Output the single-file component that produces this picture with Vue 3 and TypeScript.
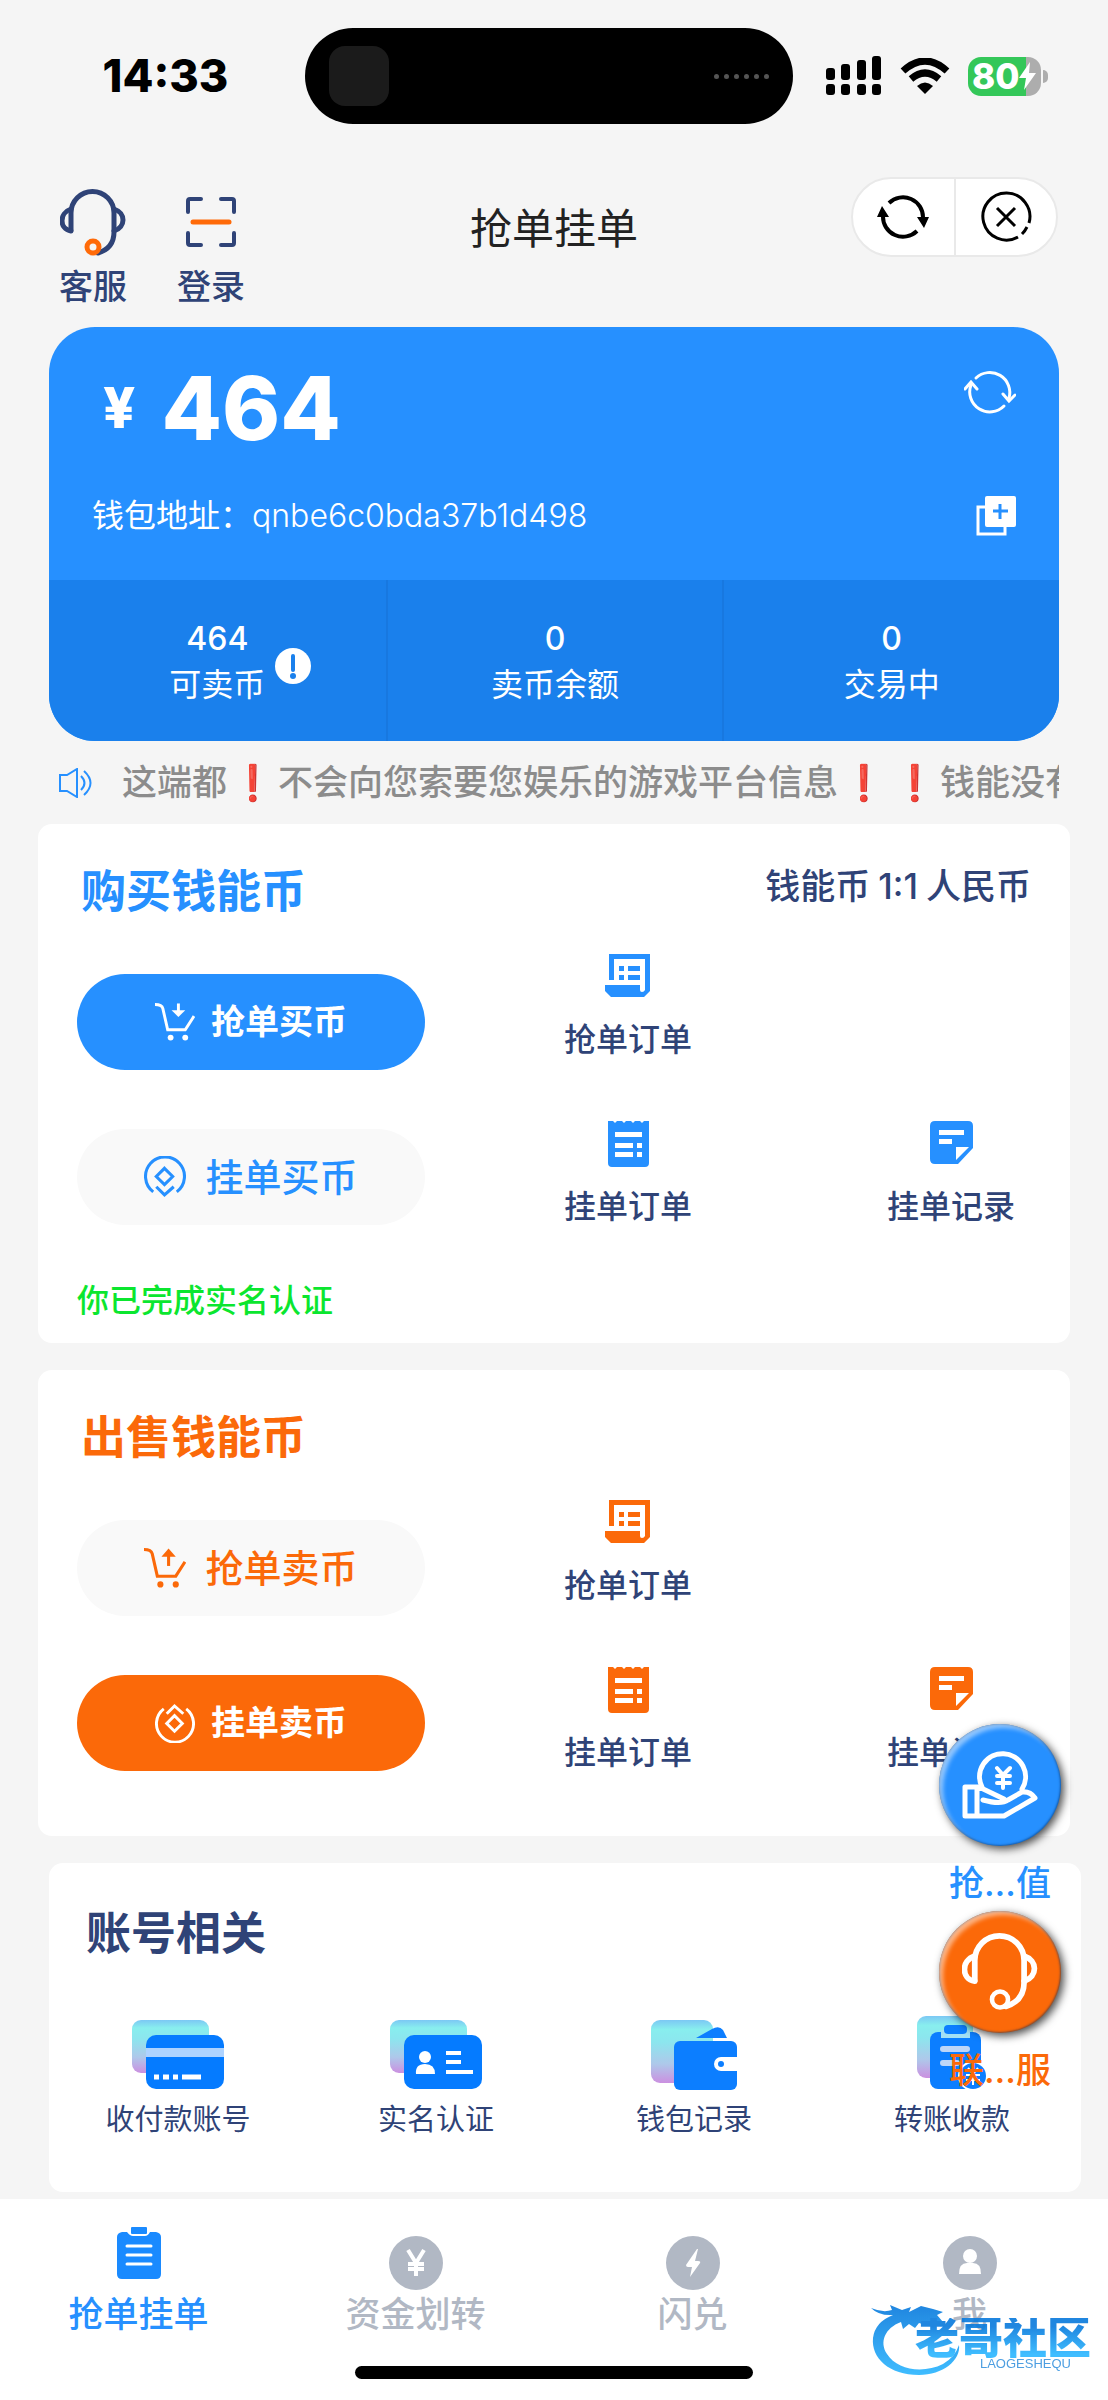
<script setup lang="ts">
interface Entry {
  kind: 'ledger' | 'receipt' | 'note'
  label: string
}

interface Action {
  label: string
  icon: 'cart' | 'coin'
  primary: boolean
}

interface TradeSection {
  id: 'buy' | 'sell'
  title: string
  rate?: string[]
  status?: string
  actions: Action[]
}

const stats = [
  { value: '464', label: '可卖币', hint: true },
  { value: '0', label: '卖币余额', hint: false },
  { value: '0', label: '交易中', hint: false },
]

const sections: TradeSection[] = [
  {
    id: 'buy',
    title: '购买钱能币',
    rate: ['钱能币', '1:1', '人民币'],
    status: '你已完成实名认证',
    actions: [
      { label: '抢单买币', icon: 'cart', primary: true },
      { label: '挂单买币', icon: 'coin', primary: false },
    ],
  },
  {
    id: 'sell',
    title: '出售钱能币',
    actions: [
      { label: '抢单卖币', icon: 'cart', primary: false },
      { label: '挂单卖币', icon: 'coin', primary: true },
    ],
  },
]

const entryRows: Entry[][] = [
  [{ kind: 'ledger', label: '抢单订单' }],
  [
    { kind: 'receipt', label: '挂单订单' },
    { kind: 'note', label: '挂单记录' },
  ],
]

const glyphs: Record<Entry['kind'], { box: string; path: string }> = {
  ledger: {
    box: '0 0 46 46',
    path: 'M4 0H45V37L39 43H6L0 37V31H35V36Q35 38 37 38T40 36V5H9V26H4ZM14 12h5v5h-5ZM23 12h12v5h-12ZM14 21h5v5h-5ZM23 21h12v5h-12Z',
  },
  receipt: {
    box: '-3 0 46 46',
    path: 'M0 0H5L7 2L9 0H14L16 2L18 0H23L25 2L27 0H32L34 2L36 0H41V42Q41 46 37 46H4Q0 46 0 42ZM7 11V16H34V11ZM7 22V27H25V22ZM29 22V27H34V22ZM7 31V36H25V31ZM29 31V36H34V31Z',
  },
  note: {
    box: '-2 0 46 46',
    path: 'M5 0H38Q43 0 43 5V27L28 43H5Q0 43 0 38V5Q0 0 5 0ZM9 9V14H34V9ZM9 18V23H22V18ZM26 26V39L39 26Z',
  },
}

const services = [
  { kind: 'card', label: '收付款账号', width: 92, height: 70 },
  { kind: 'identity', label: '实名认证', width: 92, height: 70 },
  { kind: 'wallet', label: '钱包记录', width: 87, height: 70 },
  { kind: 'transfer', label: '转账收款', width: 71, height: 74 },
]

const tabs = [
  { kind: 'orders', label: '抢单挂单' },
  { kind: 'funds', label: '资金划转' },
  { kind: 'swap', label: '闪兑' },
  { kind: 'me', label: '我' },
]

const headset = {
  left: 'M11 41V24A21.5 21.5 0 0 1 54 24V43C54 54 48 61 38 64',
  cups: 'M11 20C-1 24 -1 40 11 42M54 20C66 24 66 38 54 42',
}
</script>

<template>
  <div class="page">
    <div class="status">
      <span class="time">14:33</span>
      <div class="island">
        <span class="island-app"></span>
        <span class="island-dots"><i v-for="n in 6" :key="n"></i></span>
      </div>
      <div class="signals">
        <svg width="56" height="40" viewBox="0 0 56 40">
          <rect x="0" y="12" width="9" height="12" rx="3" />
          <rect x="15" y="8" width="9" height="16" rx="3" />
          <rect x="31" y="4" width="9" height="20" rx="3" />
          <rect x="46" y="0" width="9" height="24" rx="3" />
          <rect v-for="x in [0, 15, 31, 46]" :key="x" :x="x" y="28" width="9" height="11" rx="3" />
        </svg>
        <svg width="50" height="36" viewBox="0 0 50 36">
          <path d="M3 13Q25 -7 47 13" fill="none" stroke="#000" stroke-width="7" />
          <path d="M11 21Q25 9 39 21" fill="none" stroke="#000" stroke-width="7" />
          <path d="M17 28Q25 21 33 28L25 36Z" />
        </svg>
        <div class="battery">
          <span>80</span>
          <svg width="18" height="28" viewBox="0 0 18 28">
            <path d="M11 0L0 16H7L5 28L17 11H10Z" fill="#fff" />
          </svg>
        </div>
      </div>
    </div>

    <header class="header">
      <div class="quick">
        <a href="#service">
          <svg width="66" height="68" viewBox="0 0 66 68" fill="none" stroke="#2f4377" stroke-width="5" stroke-linecap="round">
            <path :d="headset.left" />
            <path :d="headset.cups" />
            <circle cx="33" cy="58" r="6" stroke="#ff6a08" stroke-width="5" fill="#f5f5f5" />
          </svg>
          <span>客服</span>
        </a>
        <a href="#login">
          <svg width="66" height="68" viewBox="0 0 66 68" fill="none" stroke="#2f4377" stroke-width="4" stroke-linecap="round" stroke-linejoin="round">
            <path d="M10 23V12Q10 10 12 10H23M43 10H54Q56 10 56 12V23M56 44V54Q56 56 54 56H43M23 56H12Q10 56 10 54V44" />
            <path d="M15 33H51" stroke="#ff6a08" stroke-width="5" />
          </svg>
          <span>登录</span>
        </a>
      </div>
      <h1>抢单挂单</h1>
      <div class="capsule">
        <button type="button" aria-label="刷新">
          <svg width="54" height="44" viewBox="0 0 54 44">
            <path d="M13 8A20 20 0 0 1 47 23M41 36A20 20 0 0 1 7 21" fill="none" stroke="#000" stroke-width="4" />
            <path d="M41 22H53L48 33ZM1 22H13L6 11Z" />
          </svg>
        </button>
        <button type="button" aria-label="关闭">
          <svg width="52" height="52" viewBox="0 0 52 52" fill="none" stroke="#000" stroke-width="3">
            <path d="M38 46A23.500 23.500 0 1 1 49 32M47 36Q45 40 42 43" />
            <path d="M17 17L35 35M35 17L17 35" />
          </svg>
        </button>
      </div>
    </header>

    <section class="wallet">
      <div class="wallet-main">
        <div class="balance">
          <p class="amount"><small>¥</small><strong>464</strong></p>
          <button type="button" aria-label="刷新余额">
            <svg width="52" height="46" viewBox="0 0 52 46" fill="none" stroke="#fff" stroke-width="3" stroke-linecap="round">
              <path d="M12 9A20 20 0 0 1 45 29M40 37A20 20 0 0 1 7 16" />
              <path d="M39 25L45 32L51 26M1 20L7 13L13 20" />
            </svg>
          </button>
        </div>
        <div class="address">
          <p>钱包地址：<span>qnbe6c0bda37b1d498</span></p>
          <button type="button" aria-label="复制钱包地址">
            <svg width="40" height="40" viewBox="0 0 40 40">
              <rect x="2" y="11" width="27" height="27" fill="none" stroke="#fff" stroke-width="3" />
              <rect x="9" y="0" width="31" height="31" rx="2" fill="#fff" />
              <path d="M24 8V23M17 15H32" stroke="#2690ff" stroke-width="3" />
            </svg>
          </button>
        </div>
      </div>
      <dl class="stats">
        <div v-for="stat in stats" :key="stat.label">
          <dd>{{ stat.value }}</dd>
          <dt>
            {{ stat.label }}
            <svg v-if="stat.hint" class="hint" width="36" height="36" viewBox="0 0 36 36">
              <circle cx="18" cy="18" r="18" fill="#fff" />
              <path d="M18 8V22" stroke="#1a80ec" stroke-width="4" stroke-linecap="round" />
              <circle cx="18" cy="28" r="3" fill="#1a80ec" />
            </svg>
          </dt>
        </div>
      </dl>
    </section>

    <div class="notice">
      <svg width="34" height="30" viewBox="0 0 34 30" fill="none" stroke="#2690ff" stroke-width="2">
        <path d="M1 7H8L18 1V29L8 23H1Z" />
        <path d="M22 8Q29 15 22 22M25 3Q38 15 25 27" />
      </svg>
      <p>这端都<b>❗</b>不会向您索要您娱乐的游戏平台信息<b>❗</b><b>❗</b>钱能没有</p>
    </div>

    <section v-for="section in sections" :key="section.id" class="card" :class="section.id">
      <div class="card-head">
        <h2>{{ section.title }}</h2>
        <p v-if="section.rate" class="rate">
          <span v-for="part in section.rate" :key="part">{{ part }}</span>
        </p>
      </div>
      <div class="trade">
        <div class="actions">
          <button
            v-for="action in section.actions"
            :key="action.label"
            type="button"
            class="action"
            :class="{ primary: action.primary }"
          >
            <svg v-if="action.icon === 'cart'" viewBox="0 0 41 40" fill="none" stroke="currentColor" stroke-width="3">
              <path d="M0 2Q7 2 8 6L13 28H31L40 14" />
              <template v-if="section.id === 'buy'">
                <path d="M24 1V10" />
                <path d="M17 8H31L24 15Z" fill="currentColor" stroke="none" />
              </template>
              <template v-else>
                <path d="M24 18V8" />
                <path d="M17 9H31L24 1Z" fill="currentColor" stroke="none" />
              </template>
              <circle cx="16" cy="36" r="3" fill="currentColor" stroke="none" />
              <circle cx="31" cy="36" r="3" fill="currentColor" stroke="none" />
            </svg>
            <svg v-else viewBox="0 0 41 41" :class="{ upward: section.id === 'sell' }" fill="none" stroke="currentColor" stroke-width="3">
              <path d="M9 35A19 19 0 1 1 32 35" />
              <path d="M20 12L28 20L20 28L12 20Z" />
              <path d="M12 30L20 38L29 30" />
            </svg>
            <span>{{ action.label }}</span>
          </button>
        </div>
        <div class="entries">
          <div v-for="(row, index) in entryRows" :key="index" class="entry-row">
            <a v-for="entry in row" :key="entry.label" href="#orders" class="entry">
              <svg width="46" height="46" :viewBox="glyphs[entry.kind].box">
                <path :d="glyphs[entry.kind].path" fill="currentColor" fill-rule="evenodd" />
              </svg>
              <span>{{ entry.label }}</span>
            </a>
          </div>
        </div>
      </div>
      <p v-if="section.status" class="verified">{{ section.status }}</p>
    </section>

    <section class="account">
      <h2>账号相关</h2>
      <div class="services">
        <a v-for="item in services" :key="item.kind" href="#account">
          <svg :width="item.width" :height="item.height" :viewBox="`0 0 ${item.width} ${item.height}`">
            <defs>
              <linearGradient :id="`tint-${item.kind}`" x1="0" y1="0" x2="0" y2="1">
                <stop offset="0" stop-color="#7cc8f4" />
                <stop offset="0.150" stop-color="#88eeee" />
                <stop offset="0.350" stop-color="#8ce6ee" />
                <stop offset="0.700" stop-color="#aec8ea" />
                <stop offset="1" stop-color="#cb90e0" />
              </linearGradient>
            </defs>
            <template v-if="item.kind === 'card'">
              <rect width="77" height="53" rx="9" fill="url(#tint-card)" />
              <rect x="14" y="15" width="78" height="54" rx="10" fill="#057bff" />
              <rect x="14" y="28" width="78" height="9" fill="#aed3ff" />
              <path d="M22 57H27M31 57H37M41 57H46M50 57H69" stroke="#fff" stroke-width="5" />
            </template>
            <template v-else-if="item.kind === 'identity'">
              <rect width="77" height="53" rx="9" fill="url(#tint-identity)" />
              <rect x="14" y="15" width="78" height="54" rx="10" fill="#057bff" />
              <circle cx="35" cy="37" r="6" fill="#fff" />
              <path d="M26 54Q25 44 35 44T45 54Z" fill="#fff" />
              <path d="M56 33H71M56 42H71M56 52H83" stroke="#fff" stroke-width="4" />
            </template>
            <template v-else-if="item.kind === 'wallet'">
              <rect width="62" height="63" rx="9" fill="url(#tint-wallet)" />
              <path d="M45 18L61 9Q68 5 72 10L76 18Z" fill="#0c7eff" />
              <rect x="23" y="21" width="63" height="49" rx="6" fill="#0c7eff" />
              <path d="M87 37H70A7 7 0 0 0 70 51H87Z" fill="#fff" />
              <circle cx="70" cy="44" r="3" fill="#0c7eff" />
            </template>
            <template v-else>
              <rect width="56" height="62" rx="9" fill="url(#tint-transfer)" />
              <rect x="13" y="16" width="51" height="57" rx="8" fill="#0c7eff" />
              <rect x="24" y="14" width="29" height="8" fill="#a4e0f4" />
              <rect x="27" y="9" width="23" height="9" rx="4" fill="#0c7eff" />
              <path d="M26 33H50M26 47H40" stroke="#bdd6f8" stroke-width="6" stroke-linecap="round" />
              <circle cx="56" cy="60" r="14" fill="#0c7eff" stroke="#fff" stroke-width="2" />
              <path d="M51 52L56 58L61 52M49 59H63M49 64H63M56 58V69" fill="none" stroke="#fff" stroke-width="2" />
            </template>
          </svg>
          <span>{{ item.label }}</span>
        </a>
      </div>
    </section>

    <nav class="tabs">
      <a v-for="(tab, index) in tabs" :key="tab.kind" href="#tab" :class="{ active: index === 0 }">
        <svg v-if="tab.kind === 'orders'" width="44" height="52" viewBox="0 0 44 52">
          <path d="M5 5H10Q13 9 16 9H28Q31 9 33 5H39Q44 6 44 10V47Q44 52 39 52H5Q0 52 0 47V10Q0 6 5 5Z" fill="#1a8aff" />
          <rect x="14" y="0" width="16" height="7" rx="1" fill="#1a8aff" />
          <path d="M10 19H34M10 28H34M10 37H34" stroke="#fff" stroke-width="3" stroke-linecap="round" />
        </svg>
        <svg v-else width="54" height="54" viewBox="0 0 54 54">
          <circle cx="27" cy="27" r="27" fill="#b1b8c4" />
          <path v-if="tab.kind === 'funds'" d="M19 14L27 27L35 14M19 28H35M19 33H35M27 27V40" fill="none" stroke="#fff" stroke-width="4" />
          <path v-if="tab.kind === 'swap'" d="M31 13L20 29Q20 31 22 31H26L24 41L34 27Q35 25 32 25H29L32 13Z" fill="#fff" />
          <template v-if="tab.kind === 'me'">
            <circle cx="27" cy="20" r="7" fill="#fff" />
            <path d="M16 38Q16 27 24 27H30Q38 27 38 38Z" fill="#fff" />
          </template>
        </svg>
        <span>{{ tab.label }}</span>
      </a>
    </nav>
    <div class="home-bar"></div>

    <aside class="floats">
      <a href="#recharge" class="recharge">
        <span class="disc">
          <svg width="76" height="68" viewBox="0 0 76 68" fill="none" stroke="#fff" stroke-width="5" stroke-linecap="round" stroke-linejoin="round">
            <path d="M20 36A23 23 0 1 1 60 38" />
            <path d="M3 36H17L42 48M3 36V65H42L73 47Q68 40 60 41L46 49Q39 54 21 49M15 36V65" />
            <path d="M35 17L41 24L48 17M35 25H48M35 32H48M41 24V37" stroke-width="4" />
          </svg>
        </span>
        <span>抢…值</span>
      </a>
      <a href="#contact" class="contact">
        <span class="disc">
          <svg width="76" height="78" viewBox="0 0 66 68" fill="none" stroke="#fff" stroke-width="5" stroke-linecap="round">
            <path :d="headset.left" />
            <path :d="headset.cups" />
            <circle cx="33" cy="58" r="7" fill="#fb6909" stroke-width="4" />
          </svg>
        </span>
        <span>联…服</span>
      </a>
    </aside>

    <div class="brand">
      <svg width="92" height="76" viewBox="0 0 92 76">
        <defs>
          <linearGradient id="brand-ink" x1="0" y1="0" x2="0" y2="1">
            <stop offset="0" stop-color="#0879dc" />
            <stop offset="1" stop-color="#2bb6ff" />
          </linearGradient>
        </defs>
        <path
          d="M0 8Q12 13 21 10L19 5L31 10L40 7L38 12L50 6L62 9L72 12L66 15L72 22L58 21L62 27L48 23L44 28L38 24L32 29L30 22C14 28 8 42 16 54C26 70 52 74 72 64Q84 57 88 45C90 60 72 75 48 75C18 75 0 58 2 38Q4 22 22 15Q8 16 0 8Z"
          fill="url(#brand-ink)"
        />
      </svg>
      <p><strong>老哥社区</strong><small>LAOGESHEQU</small></p>
    </div>
  </div>
</template>

<style>
body {
  margin: 0;
  background: #f5f5f5;
}
</style>

<style scoped>
.page {
  position: relative;
  display: flex;
  flex-direction: column;
  min-height: 100vh;
  box-sizing: border-box;
  overflow: hidden;
  background: #f5f5f5;
  color: #2f4377;
  font-family: Inter, 'Noto Sans CJK SC', sans-serif;
}
h1,
h2,
p,
dl,
dd,
dt {
  margin: 0;
}
a {
  color: inherit;
  text-decoration: none;
}
button {
  padding: 0;
  border: 0;
  background: none;
  color: inherit;
  font: inherit;
}
svg {
  display: block;
  flex: none;
}

.status {
  display: grid;
  grid-template-columns: 1fr 488px 1fr;
  align-items: center;
  padding: 28px 10px 0 0;
}
.time {
  padding-left: 26px;
  color: #000;
  font-size: 45px;
  font-weight: 800;
  line-height: 56px;
  text-align: center;
}
.island {
  display: flex;
  align-items: center;
  justify-content: space-between;
  box-sizing: border-box;
  height: 96px;
  padding: 0 24px;
  border-radius: 48px;
  background: #000;
}
.island-app {
  width: 60px;
  height: 60px;
  border-radius: 16px;
  background: #1b1b1b;
}
.island-dots {
  display: flex;
  gap: 5px;
}
.island-dots i {
  width: 5px;
  height: 5px;
  border-radius: 50%;
  background: #555;
}
.signals {
  display: flex;
  align-items: center;
  gap: 18px;
  padding-left: 33px;
}
.battery {
  position: relative;
  display: flex;
  align-items: center;
  box-sizing: border-box;
  width: 73px;
  height: 39px;
  padding-left: 4px;
  border-radius: 13px;
  background: linear-gradient(90deg, #34c759 80%, #adadad 80%);
  color: #fff;
  font-size: 35px;
  font-weight: 800;
  line-height: 39px;
}
.battery::after {
  content: '';
  position: absolute;
  top: 13px;
  right: -7px;
  width: 5px;
  height: 13px;
  border-radius: 0 6px 6px 0;
  background: #adadad;
}

.header {
  display: grid;
  grid-template-columns: 1fr auto 1fr;
  align-items: start;
  height: 150px;
  padding: 53px 50px 0;
}
.quick {
  display: flex;
  gap: 50px;
  padding: 12px 0 0 9px;
}
.quick a {
  display: flex;
  flex-direction: column;
  align-items: center;
  gap: 10px;
  font-size: 34px;
  font-weight: 500;
  line-height: 40px;
}
h1 {
  padding-top: 22px;
  color: #222;
  font-size: 42px;
  font-weight: 400;
  line-height: 60px;
}
.capsule {
  display: flex;
  justify-self: end;
  box-sizing: border-box;
  width: 207px;
  height: 80px;
  border: 2px solid #e9e9e9;
  border-radius: 40px;
  background: #fff;
}
.capsule button {
  display: flex;
  flex: 1;
  align-items: center;
  justify-content: center;
}
.capsule button + button {
  border-left: 2px solid #e9e9e9;
}

.wallet {
  margin: 0 49px;
  overflow: hidden;
  border-radius: 46px;
  background: #2690ff;
  color: #fff;
}
.wallet-main {
  padding: 33px 43px 40px;
}
.balance,
.address {
  display: flex;
  align-items: center;
  justify-content: space-between;
}
.balance {
  height: 96px;
}
.balance button {
  align-self: flex-start;
  padding-top: 9px;
}
.amount {
  display: flex;
  align-items: center;
  gap: 26px;
  padding-left: 11px;
  line-height: 96px;
}
.amount small {
  font-size: 56px;
  font-weight: 800;
}
.amount strong {
  font-size: 88px;
  font-weight: 800;
}
.address {
  padding-top: 36px;
  font-size: 32px;
  line-height: 48px;
}
.address span {
  font-weight: 300;
}
.stats {
  display: grid;
  grid-template-columns: repeat(3, 1fr);
  background: #1a80ec;
  font-size: 32px;
  text-align: center;
}
.stats > div {
  padding: 36px 0 33px;
}
.stats > div + div {
  border-left: 2px solid #1878e0;
}
.stats dd {
  font-weight: 500;
  line-height: 46px;
}
.stats dt {
  position: relative;
  width: fit-content;
  margin: 0 auto;
  line-height: 46px;
}
.hint {
  position: absolute;
  top: -14px;
  left: calc(100% + 10px);
}

.notice {
  display: flex;
  align-items: center;
  gap: 29px;
  height: 83px;
  margin: 0 49px 0 59px;
}
.notice p {
  flex: 1;
  min-width: 0;
  overflow: hidden;
  color: #8c8c8c;
  font-size: 35px;
  font-weight: 500;
  line-height: 52px;
  white-space: nowrap;
}
.notice b {
  display: inline-block;
  width: 51px;
  color: #e60000;
  font-family: 'DejaVu Sans', sans-serif;
  font-weight: 400;
  text-align: center;
}

.card {
  margin: 0 38px 27px;
  padding: 38px 39px 0;
  border-radius: 14px;
  background: #fff;
}
.buy {
  padding-bottom: 22px;
  --accent: #2690ff;
}
.sell {
  padding-bottom: 60px;
  --accent: #fb6909;
}
.card-head {
  display: flex;
  align-items: flex-start;
  justify-content: space-between;
  height: 80px;
  padding-left: 4px;
}
h2 {
  font-size: 45px;
  font-weight: 700;
  line-height: 60px;
}
.card h2 {
  color: var(--accent);
}
.rate {
  display: flex;
  gap: 8px;
  font-size: 35px;
  font-weight: 500;
  line-height: 48px;
}
.trade {
  display: grid;
  grid-template-columns: 348px 1fr;
}
.actions {
  display: flex;
  flex-direction: column;
  gap: 59px;
  padding-top: 32px;
}
.action {
  display: flex;
  align-items: center;
  justify-content: center;
  gap: 19px;
  height: 96px;
  border-radius: 48px;
  background: #f9f9f9;
  color: var(--accent);
  font-size: 38px;
  font-weight: 500;
  line-height: 48px;
}
.action svg {
  width: 42px;
  height: 42px;
}
.action.primary {
  gap: 16px;
  background: var(--accent);
  color: #fff;
  font-size: 34px;
  font-weight: 700;
}
.action.primary svg {
  width: 40px;
  height: 40px;
}
.upward {
  transform: scaleY(-1);
}
.entries {
  display: flex;
  flex-direction: column;
  gap: 58px;
  padding: 12px 16px 0 139px;
}
.entry-row {
  display: flex;
  justify-content: space-between;
}
.entry {
  display: flex;
  flex-direction: column;
  align-items: center;
  gap: 17px;
  color: var(--accent);
}
.entry span {
  color: #2f4377;
  font-size: 32px;
  font-weight: 500;
  line-height: 46px;
}
.verified {
  padding-top: 51px;
  color: #0be62f;
  font-size: 32px;
  font-weight: 500;
  line-height: 40px;
}

.account {
  margin: 0 27px 7px 49px;
  padding: 41px 0 50px;
  border-radius: 14px;
  background: #fff;
}
.account h2 {
  padding-left: 37px;
}
.services {
  display: grid;
  grid-template-columns: repeat(4, 1fr);
  padding-top: 52px;
}
.services a {
  display: flex;
  flex-direction: column;
  align-items: center;
  justify-content: flex-end;
  gap: 8px;
  font-size: 29px;
  line-height: 44px;
}

.tabs {
  display: grid;
  flex: 1;
  grid-template-columns: repeat(4, 1fr);
  padding: 28px 0 38px;
  background: #fff;
  color: #b1b8c4;
  font-size: 35px;
  font-weight: 500;
}
.tabs a {
  display: flex;
  flex-direction: column;
  align-items: center;
  padding-top: 9px;
  line-height: 48px;
}
.tabs .active {
  gap: 11px;
  padding-top: 0;
  color: #2690ff;
}
.home-bar {
  position: absolute;
  bottom: 21px;
  left: 50%;
  width: 398px;
  height: 13px;
  border-radius: 7px;
  background: #000;
  transform: translateX(-50%);
}

.floats {
  position: absolute;
  right: 47px;
  bottom: 308px;
  display: flex;
  flex-direction: column;
  gap: 6px;
}
.floats a {
  display: flex;
  flex-direction: column;
  align-items: center;
  gap: 15px;
  font-size: 35px;
  font-weight: 500;
  line-height: 44px;
}
.disc {
  display: flex;
  align-items: center;
  justify-content: center;
  width: 122px;
  height: 122px;
  border-radius: 50%;
  box-shadow:
    3px 3px 8px rgba(0, 0, 0, 0.7),
    inset 4px 4px 4px rgba(255, 255, 255, 0.5),
    inset 0 0 2px 1px rgba(0, 40, 90, 0.5);
}
.recharge {
  color: #2690ff;
}
.recharge .disc {
  background: #2690ff;
}
.contact {
  color: #fb6909;
}
.contact .disc {
  background: #fb6909;
}

.brand {
  position: absolute;
  right: 17px;
  bottom: 24px;
  display: flex;
  align-items: flex-end;
  opacity: 0.9;
}
.brand p {
  display: flex;
  flex-direction: column;
  align-items: flex-end;
  margin-left: -48px;
  padding-bottom: 6px;
}
.brand strong {
  background: linear-gradient(#0879dc 20%, #2bb6ff 90%);
  background-clip: text;
  -webkit-background-clip: text;
  color: transparent;
  font-size: 44px;
  font-weight: 900;
  line-height: 40px;
}
.brand small {
  padding-right: 20px;
  color: #3a94de;
  font-family: 'Liberation Sans', sans-serif;
  font-size: 13px;
  line-height: 12px;
}
</style>
